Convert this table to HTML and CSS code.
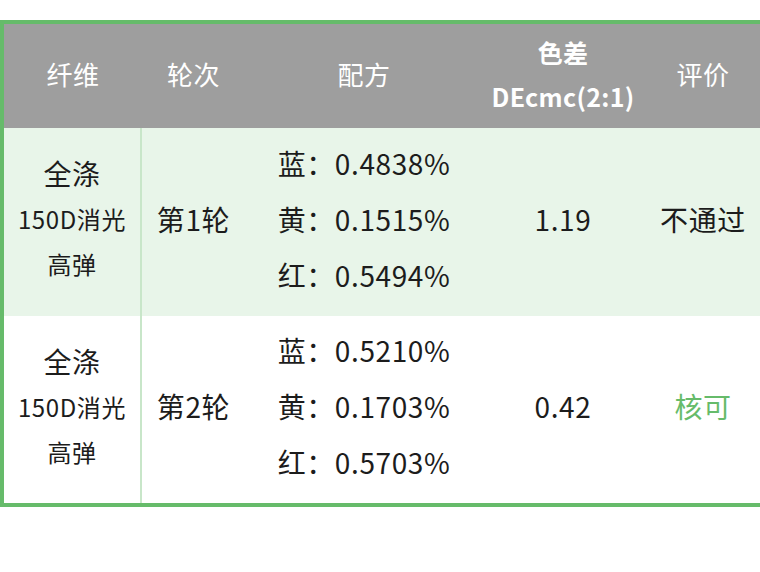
FILE: index.html
```html
<!DOCTYPE html>
<html lang="zh-CN">
<head>
<meta charset="utf-8">
<title>色差评价</title>
<link rel="stylesheet" href="styles.css">
</head>
<body>
<div class="frame">
  <table class="grid">
    <colgroup>
      <col class="c-fiber">
      <col class="c-round">
      <col class="c-recipe">
      <col class="c-de">
      <col class="c-eval">
    </colgroup>
    <thead>
      <tr class="head">
        <th>纤维</th>
        <th>轮次</th>
        <th>配方</th>
        <th class="bold"><div class="hl">色差</div><div class="hl">DEcmc(2:1)</div></th>
        <th>评价</th>
      </tr>
    </thead>
    <tbody>
      <tr class="row tint">
        <td class="fiber"><div class="big">全涤</div><div class="small">150D消光</div><div class="small">高弹</div></td>
        <td>第1轮</td>
        <td><div class="recipe"><div>蓝：0.4838%</div><div>黄：0.1515%</div><div>红：0.5494%</div></div></td>
        <td>1.19</td>
        <td>不通过</td>
      </tr>
      <tr class="row">
        <td class="fiber"><div class="big">全涤</div><div class="small">150D消光</div><div class="small">高弹</div></td>
        <td>第2轮</td>
        <td><div class="recipe"><div>蓝：0.5210%</div><div>黄：0.1703%</div><div>红：0.5703%</div></div></td>
        <td>0.42</td>
        <td class="ok">核可</td>
      </tr>
    </tbody>
  </table>
</div>
</body>
</html>
```

FILE: styles.css
```css
html, body {
  margin: 0;
  padding: 0;
  background: #ffffff;
  overflow: hidden;
}

body {
  padding-top: 20px;
  font-family: "Noto Sans CJK SC", "Noto Sans", sans-serif;
  color: #1c1c1c;
}

.frame {
  width: 759px;
  border: 4px solid #66bb6a;
}

.grid {
  width: 759px;
  table-layout: fixed;
  border-collapse: separate;
  border-spacing: 0;
}

.c-fiber { width: 138px; }
.c-round { width: 103px; }
.c-recipe { width: 238px; }
.c-de { width: 160px; }
.c-eval { width: 120px; }

.head {
  height: 104px;
}

.head th {
  background: #9e9e9e;
  color: #ffffff;
  font-size: 26px;
  font-weight: 400;
  letter-spacing: 0.4px;
  padding: 0 0 5px;
  text-align: center;
  vertical-align: middle;
}

.head th.bold {
  font-weight: 700;
  font-size: 25px;
  letter-spacing: 0.3px;
}

.hl {
  line-height: 44px;
}

.row {
  height: 187px;
}

.row.tint {
  height: 188px;
}

.row td {
  font-size: 28px;
  letter-spacing: 0.6px;
  text-align: center;
  vertical-align: middle;
  padding: 0 0 7px;
}

.row.tint td {
  background: #e8f5e9;
}

.row td.fiber {
  border-right: 2px solid #c8e6c9;
}

.big {
  font-size: 28px;
  line-height: 45px;
}

.small {
  font-size: 24px;
  line-height: 45px;
}

.recipe {
  display: inline-block;
  text-align: left;
  line-height: 56px;
}

.row td.ok {
  color: #66bb6a;
}
```
